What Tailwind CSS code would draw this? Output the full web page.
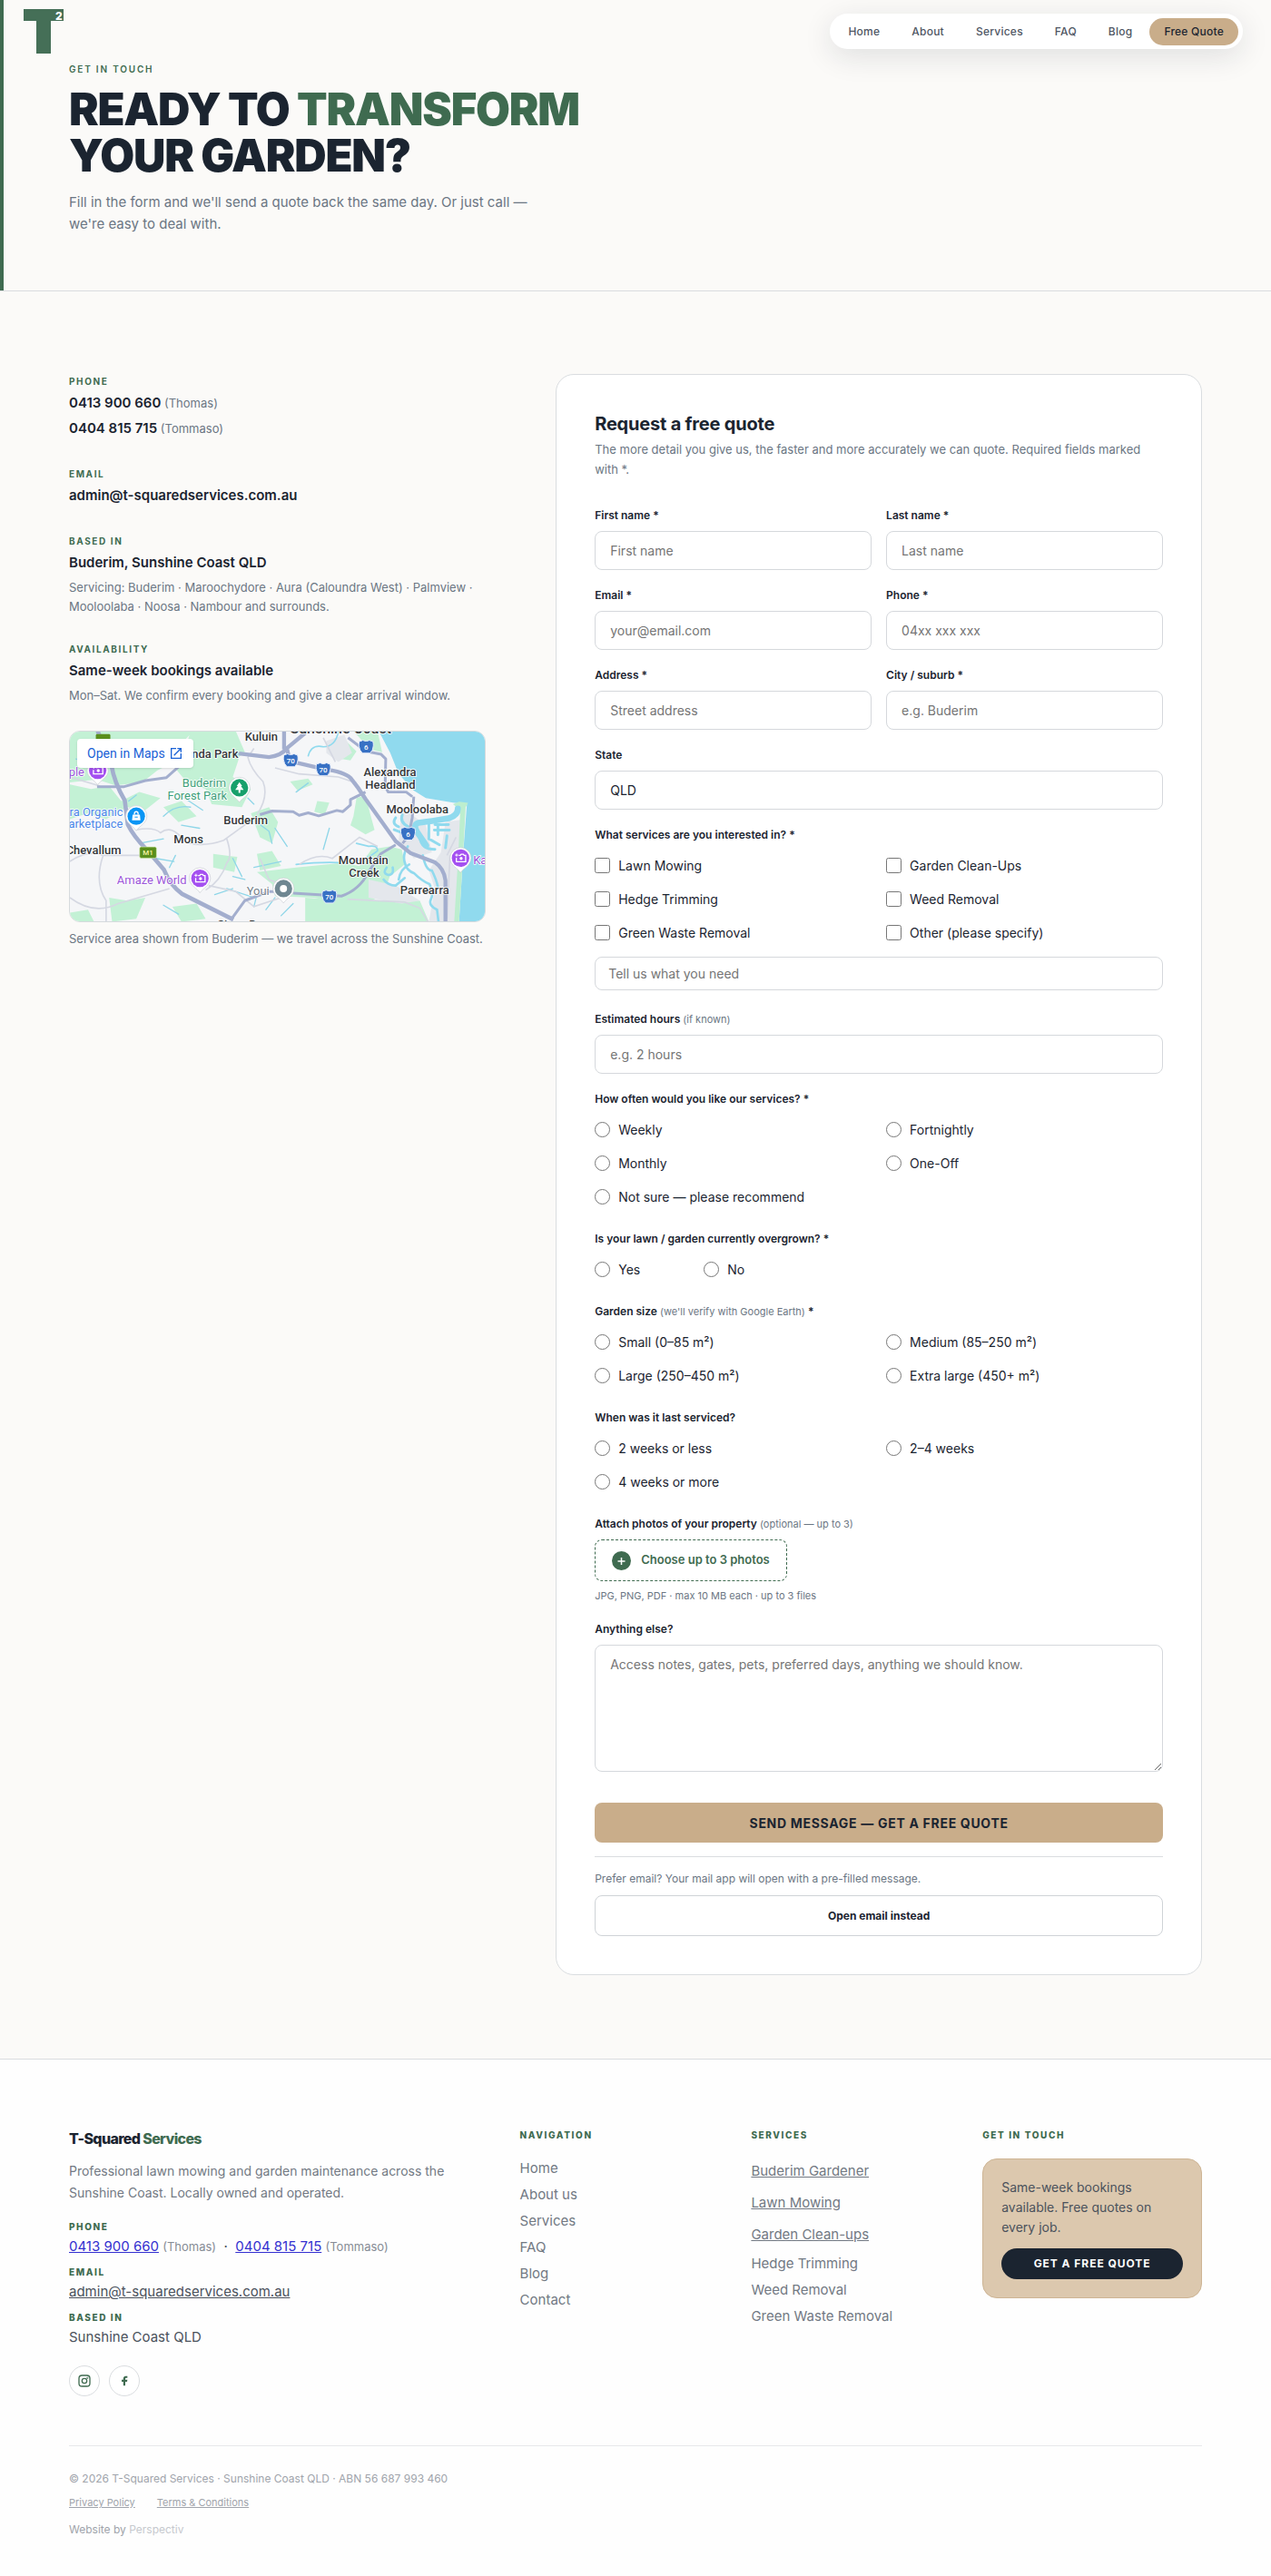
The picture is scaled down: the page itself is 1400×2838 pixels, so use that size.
<!DOCTYPE html>
<html lang="en">
<head>
    <meta charset="utf-8"/>
    <meta name="viewport" content="width=device-width, initial-scale=1"/>
    <title>Contact | T-Squared Services</title>
    <script src="https://cdn.jsdelivr.net/npm/@tailwindcss/browser@4"></script>
    <style>
        body {
            font-family: 'Inter', 'Liberation Sans', sans-serif;
        }
    </style>
</head>
<body class="bg-[#fbfaf8] text-[#1b2430]">
    <!-- Floating header -->
    <header class="absolute inset-x-0 top-0 z-10 flex items-start justify-between pl-[26px] pr-[31px]">
        <a href="#" class="mt-[9px]" aria-label="T-Squared Services">
            <svg class="w-[44px] h-[50px]" viewBox="0 0 44 50">
                <path d="M0 1h44v13H30v36H14V14H0z" fill="#456f57"/>
                <text x="35" y="13" font-size="12" font-weight="800" fill="#fff">2</text>
            </svg>
        </a>
        <nav class="mt-[15px] flex items-center h-[39px] rounded-full bg-white pl-1 pr-[5px] text-[12px] font-medium tracking-[0.02em] text-[#4f5663] shadow-[0_8px_32px_rgba(27,36,48,0.12)]">
            <a href="#" class="px-4">Home</a>
            <a href="#" class="px-4 ml-[3px]">About</a>
            <a href="#" class="px-4 ml-[3px]">Services</a>
            <a href="#" class="px-4 ml-[3px]">FAQ</a>
            <a href="#" class="px-4 ml-[3px]">Blog</a>
            <a href="#quote" class="flex items-center h-[30px] ml-[3px] px-4 rounded-full bg-[#c9ad8a] text-[#1b2430]">Free Quote</a>
        </nav>
    </header>

    <!-- Hero -->
    <section class="border-b border-[#dadcdf]">
        <div class="border-l-4 border-[#3f6b50] pl-[72px] pr-[76px] pt-[68px] pb-[61px]">
            <p class="text-[10px] leading-4 font-semibold tracking-[0.18em] text-[#3f6b50]">GET IN TOUCH</p>
            <h1 class="mt-[11px] text-[49px] leading-[51px] font-black tracking-[-0.025em]">READY TO <span class="text-[#3f6b50]">TRANSFORM</span><br/>YOUR GARDEN?</h1>
            <p class="mt-[14px] max-w-[520px] text-[15px] leading-6 text-[#6b7683]">Fill in the form and we'll send a quote back the same day. Or just call — we're easy to deal with.</p>
        </div>
    </section>

    <!-- Contact details + form -->
    <main class="grid grid-cols-[1fr_1.55fr] items-start gap-[77px] px-[76px] pt-[91px] pb-[92px]">
        <div class="flex flex-col gap-7">
            <div>
                <h2 class="text-[10px] leading-4 font-bold tracking-[0.16em] text-[#3f6b50]">PHONE</h2>
                <p class="mt-[2px] leading-7 text-[13px] text-[#6b7683]"><a href="tel:0413900660" class="text-[15px] font-semibold text-[#1b2430]">0413 900 660</a> (Thomas)</p>
                <p class="leading-7 text-[13px] text-[#6b7683]"><a href="tel:0404815715" class="text-[15px] font-semibold text-[#1b2430]">0404 815 715</a> (Tommaso)</p>
            </div>
            <div>
                <h2 class="text-[10px] leading-4 font-bold tracking-[0.16em] text-[#3f6b50]">EMAIL</h2>
                <p class="mt-[2px] leading-7 text-[15px] font-semibold"><a href="mailto:admin@t-squaredservices.com.au">admin@t-squaredservices.com.au</a></p>
            </div>
            <div>
                <h2 class="text-[10px] leading-4 font-bold tracking-[0.16em] text-[#3f6b50]">BASED IN</h2>
                <p class="mt-[2px] leading-7 text-[15px] font-semibold">Buderim, Sunshine Coast QLD</p>
                <p class="mt-[3px] text-[13px] leading-[21px] text-[#6b7683]">Servicing: Buderim · Maroochydore · Aura (Caloundra West) · Palmview · Mooloolaba · Noosa · Nambour and surrounds.</p>
            </div>
            <div>
                <h2 class="text-[10px] leading-4 font-bold tracking-[0.16em] text-[#3f6b50]">AVAILABILITY</h2>
                <p class="mt-[2px] leading-7 text-[15px] font-semibold">Same-week bookings available</p>
                <p class="mt-[3px] text-[13px] leading-[21px] text-[#6b7683]">Mon–Sat. We confirm every booking and give a clear arrival window.</p>
            </div>
            <div>
                <div class="relative h-[211px] rounded-xl border border-[#d6dadd] overflow-hidden">
                    <svg class="block w-full h-full" viewBox="20 48 1376 632" preserveAspectRatio="xMidYMid slice" font-family="Roboto, sans-serif">
                        <defs>
                            <g id="photo-pin">
                                <path d="M0 48C-8 34-35 24-35 0a35 35 0 0 1 70 0C35 24 8 34 0 48z" fill="#fff" stroke="#c9ccd1" stroke-width="2"/>
                                <circle r="29" fill="#a450f0"/>
                                <path d="M-6-9h5l3-4h7l3 4h5v21h-31V-1" fill="none" stroke="#fff" stroke-width="4"/>
                                <circle cx="2" cy="1" r="5" fill="#fff"/>
                                <path d="M-13-15v10M-18-10h10" stroke="#fff" stroke-width="3"/>
                            </g>
                            <path id="shield" d="M-22-20q6 1 11-3 5 3 11 3t11-3q5 4 11 3 3 8 2 16-1 16-11 24H-12q-10-8-12-24-1-8 2-16z" fill="#3871c4" stroke="#e8eefb" stroke-width="3"/>
                        </defs>
                        <rect x="20" y="48" width="1376" height="632" fill="#f5f6f8"/>
                        <!-- Parkland -->
                        <g fill="#c3f1d5">
                            <path d="M20 48h410l-40 40-20 60-60 30-50 40-90 10-60-20-90 10z"/>
                            <path d="M420 48h150l30 70-50 40-120 20-40-30z"/>
                            <path d="M20 225l70 15 60-10 40 50 60-30 70 20-50 40-60-10-70 40-60-20-60 20z"/>
                            <path d="M430 70l90-10 60 80-20 60 60 40-30 60-100-10-20-50-60-20-50-60z"/>
                            <path d="M330 300l60-20 50 50-60 20zM620 320l60-20 30 50-20 70-40-20zM495 455l80 10-10 50-70-15zM750 215l60-10 15 20-50 20zM640 455l50-10 30 50-70 15zM840 280l40 5-15 40-35-10zM150 600l60 10 60-10-30 70-80 10zM360 630l80-10 30 50-80 10zM20 650l60-10 20 40H20z"/>
                            <path d="M970 270l30-10 15 60 15 55-30 15-50-30 10-30z"/>
                            <path d="M770 500l150-15 60 10 40-55 60-10 40 10 10 50-50 40-20 60-80 40-150-30-130-5-10-40-50-40z"/>
                            <path d="M800 600l140 10 240 0 30 70H800z"/>
                            <path d="M870 85l60-10 40 40-20 30-60-10zM960 48h80l15 70-40-10z"/>
                        </g>
                        <g fill="#e4e7ec">
                            <path d="M1265 350l60-10-6 150-14 190h-95l20-110-20-60 40-60z"/>
                            <path d="M1120 300l80 60 20 90-60 20-50-60z"/>
                            <path d="M1010 540l90 20 80 50-60 10-110-20z"/>
                            <path d="M870 80l60-20 25 60-45 30-40-30z"/>
                        </g>
                        <!-- Ocean, spit and river mouth -->
                        <path d="M1044 48h352v632h-86l14-230 12-160-46-5-90-15-40-25-50-55-28-70z" fill="#90daee"/>
                        <path d="M1290 290l20-8 30 4-8 14-8 150-14 230h-16l14-230 6-140z" fill="#bdeecf"/>
                        <path d="M1150 275q20-8 60 8l72 6-4 28-90 14z" fill="#f5f6f8"/>
                        <g fill="none" stroke="#90daee" stroke-linecap="round">
                            <path d="M1306 305q0 22-30 32-60 10-100 15-20 5-5 30l30 45" stroke-width="20"/>
                            <path d="M1100 335q-15 20 10 30M1122 325q-10 25 20 40M1095 375l40 15M1210 345v60l35 20M1240 362v30M1275 358h-45M1278 376h-50M1270 395l-5 40M1180 400q5 40 50 40" stroke-width="9"/>
                            <path d="M1140 430q-20 30-8 60 5 20 30 30 25 25 50 35 15 30 5 50-10 20 20 35l5 40M1070 500q-15 20 5 25 20 0 15-25M1060 540q15 20 40 20l30-25M1145 490q-30 15-35 50M1190 460q10 50 30 50 15 30 20 55" stroke-width="8"/>
                            <path d="M810 130q10-40 50-30 40 0 50-50M770 490q90-10 160-5 70-5 110-40 0-20-30-15l-40-10" stroke-width="5"/>
                        </g>
                        <!-- Creeks -->
                        <g fill="none" stroke="#8fd6e8" stroke-width="4" stroke-linecap="round">
                            <path d="M330 330q40-40 90-30M400 270l60 40M560 470l30 60M640 350l40 30 10 40M700 370l40 60M540 570l90 30M500 590l60-20M330 625l50 30M350 500l20-40M700 600l-30 40M760 620l-40 40M770 250l40-30M880 370l-20 70M720 480l-90 20M600 540l-40-10M250 420l80-15M450 370l-60-10M215 280l25-20M305 470l60 10"/>
                            <path d="M120 70l60 30M560 130l30-10M610 270l20 20M640 590l-10 40M40 140l60 20"/>
                        </g>
                        <!-- Minor roads -->
                        <g fill="none" stroke="#d5d8e2" stroke-width="5">
                            <path d="M640 325q40-60 20-110-40-40-50-80l20-30M240 375q60-10 80 10 40-30 80 30 60 20 130-5l110-80M540 405q20 60 0 80-20 60-70 90M20 480q60-40 110-20l130 0M130 460q-30 90 10 150v70M20 600q80 60 160 20l170-50M480 560l90 20 60 50 90-30M780 490q60-40 110-20l90-70 60 30"/>
                            <path d="M700 170l80 20 130 10 60 20M860 70l40 80M940 605l190 10 50 20 30 50M650 470l30 70 80 30M20 200l100 30M1280 460l-10 210M1300 400l-30 60"/>
                        </g>
                        <!-- Main roads -->
                        <g fill="none" stroke="#a3aece" stroke-width="9" stroke-linejoin="round">
                            <path d="M730 48v60M580 122l100 12q40-4 60-30l60-50M740 108l10 40 110 25q70 10 90 30 25 30 50 70l100 140 50 40 80 30q30 20 35 60v140" stroke-width="13"/>
                            <path d="M112 48l45 110q10 60 45 120l10 80q20 40 60 80l60 70q20 50 60 80l170 85" stroke-width="14"/>
                            <path d="M110 232h90l70-20 70-10 45-40M650 325l40-12 70 2 20 12 30-8 35 10 60-18 20 4 25-22v-18l50-25M1155 265l-20-15-60 0-10-20 2-90-15-15-50-10-60-45M1160 265l-5 70-12 60-20 25M1100 425l-50 30-40 60q-30 60-90 80l-160-10M740 580h-60l-80 30-45 62"/>
                        </g>
                        <!-- Route badges -->
                        <rect x="106" y="58" width="48" height="34" rx="4" fill="#5a8f1c"/>
                        <rect x="251" y="432" width="56" height="37" rx="5" fill="#5a8f1c" stroke="#d8efb8" stroke-width="2"/>
                        <use href="#shield" x="752" y="146"/>
                        <use href="#shield" x="860" y="176"/>
                        <use href="#shield" x="880" y="598"/>
                        <use href="#shield" x="1002" y="101"/>
                        <use href="#shield" x="1141" y="389"/>
                        <g fill="#fff" font-size="24" font-weight="500" text-anchor="middle">
                            <text x="279" y="460" fill="#f6f3a4">M1</text>
                            <text x="752" y="155">70</text>
                            <text x="860" y="185">70</text>
                            <text x="880" y="607">70</text>
                            <text x="1002" y="110">6</text>
                            <text x="1141" y="398">6</text>
                        </g>
                        <!-- Pins -->
                        <use href="#photo-pin" x="112" y="178"/>
                        <use href="#photo-pin" x="451" y="536"/>
                        <use href="#photo-pin" x="1315" y="469"/>
                        <g transform="translate(582 236)">
                            <path d="M0 48C-8 34-35 24-35 0a35 35 0 0 1 70 0C35 24 8 34 0 48z" fill="#fff" stroke="#c9ccd1" stroke-width="2"/>
                            <circle r="29" fill="#17a06b"/>
                            <path d="M0-19l9 13H5l9 13H3v10h-6V7h-11l9-13h-4z" fill="#fff"/>
                        </g>
                        <g transform="translate(240 330)">
                            <path d="M0 48C-8 34-35 24-35 0a35 35 0 0 1 70 0C35 24 8 34 0 48z" fill="#fff" stroke="#c9ccd1" stroke-width="2"/>
                            <circle r="29" fill="#0a95f5"/>
                            <path d="M-12-5h24l2 19h-28z" fill="#fff"/>
                            <path d="M-6-5v-4a6 6 0 0 1 12 0v4" fill="none" stroke="#fff" stroke-width="4"/>
                            <path d="M-5 3h10" stroke="#0a95f5" stroke-width="3"/>
                        </g>
                        <g transform="translate(728 570)">
                            <path d="M0 48C-8 34-35 24-35 0a35 35 0 0 1 70 0C35 24 8 34 0 48z" fill="#fff" stroke="#c9ccd1" stroke-width="2"/>
                            <circle r="29" fill="#6f8792"/>
                            <circle r="12" fill="#fff"/>
                        </g>
                        <!-- Place names -->
                        <g font-size="39" stroke="#fff" stroke-width="5" stroke-linejoin="round" paint-order="stroke">
                            <g fill="#333639" font-weight="500">
                                <text x="600" y="81">Kuluin</text>
                                <text x="750" y="55" font-size="48">Sunshine Coast</text>
                                <text x="578" y="138" text-anchor="end">Sippy Kunda Park</text>
                                <text x="1081" y="198" text-anchor="middle">Alexandra</text>
                                <text x="1082" y="238" text-anchor="middle">Headland</text>
                                <text x="1172" y="321" text-anchor="middle">Mooloolaba</text>
                                <text x="603" y="358" text-anchor="middle">Buderim</text>
                                <text x="413" y="421" text-anchor="middle">Mons</text>
                                <text x="190" y="455" text-anchor="end">Chevallum</text>
                                <text x="993" y="489" text-anchor="middle">Mountain</text>
                                <text x="995" y="530" text-anchor="middle">Creek</text>
                                <text x="1196" y="587" text-anchor="middle">Parrearra</text>
                                <text x="620" y="702" text-anchor="middle">Sippy Downs</text>
                            </g>
                            <g fill="#3d9e7a" text-anchor="end">
                                <text x="538" y="234">Buderim</text>
                                <text x="541" y="275">Forest Park</text>
                            </g>
                            <g fill="#4a86e8" text-anchor="end">
                                <text x="196" y="330">Kunara Organic</text>
                                <text x="196" y="370">Marketplace</text>
                            </g>
                            <g fill="#9a55d9">
                                <text x="68" y="198" text-anchor="end">Temple</text>
                                <text x="407" y="556" text-anchor="end">Amaze World</text>
                                <text x="1357" y="489">Kawana</text>
                            </g>
                            <text x="606" y="590" fill="#75808a">Youi</text>
                        </g>
                    </svg>
                    <a href="#" class="absolute left-2 top-2 flex items-center gap-1 h-8 px-[11px] bg-white rounded-sm shadow text-[14px] text-[#1a62d6] font-['Roboto']">Open in Maps
                        <svg class="w-4 h-4" viewBox="0 0 24 24" fill="currentColor"><path d="M19 19H5V5h7V3H3v18h18v-9h-2zM14 3v2h3.600l-9.800 9.800 1.400 1.400L19 6.400V10h2V3z"/></svg>
                    </a>
                </div>
                <p class="mt-2 text-[13px] leading-[21px] text-[#6b7683]">Service area shown from Buderim — we travel across the Sunshine Coast.</p>
            </div>
        </div>

        <div id="quote" class="rounded-[20px] border border-[#dadde0] bg-white p-[42px]">
            <h2 class="text-[20px] leading-6 font-bold tracking-[-0.01em]">Request a free quote</h2>
            <p class="mt-[5px] text-[13px] leading-[22px] text-[#6b7683]">The more detail you give us, the faster and more accurately we can quote. Required fields marked with *.</p>

            <form class="mt-[31px] flex flex-col gap-[19px]">
                <div class="grid grid-cols-2 gap-x-4 gap-y-[19px]">
                    <div class="flex flex-col gap-2">
                        <label for="first-name" class="text-[12px] leading-[18px] font-semibold">First name *</label>
                        <input id="first-name" type="text" placeholder="First name" class="h-[43px] px-4 rounded-lg border border-[#d5d8dc] bg-white text-[14px] placeholder:text-[#757575]"/>
                    </div>
                    <div class="flex flex-col gap-2">
                        <label for="last-name" class="text-[12px] leading-[18px] font-semibold">Last name *</label>
                        <input id="last-name" type="text" placeholder="Last name" class="h-[43px] px-4 rounded-lg border border-[#d5d8dc] bg-white text-[14px] placeholder:text-[#757575]"/>
                    </div>
                    <div class="flex flex-col gap-2">
                        <label for="email" class="text-[12px] leading-[18px] font-semibold">Email *</label>
                        <input id="email" type="email" placeholder="your@email.com" class="h-[43px] px-4 rounded-lg border border-[#d5d8dc] bg-white text-[14px] placeholder:text-[#757575]"/>
                    </div>
                    <div class="flex flex-col gap-2">
                        <label for="phone" class="text-[12px] leading-[18px] font-semibold">Phone *</label>
                        <input id="phone" type="tel" placeholder="04xx xxx xxx" class="h-[43px] px-4 rounded-lg border border-[#d5d8dc] bg-white text-[14px] placeholder:text-[#757575]"/>
                    </div>
                    <div class="flex flex-col gap-2">
                        <label for="address" class="text-[12px] leading-[18px] font-semibold">Address *</label>
                        <input id="address" type="text" placeholder="Street address" class="h-[43px] px-4 rounded-lg border border-[#d5d8dc] bg-white text-[14px] placeholder:text-[#757575]"/>
                    </div>
                    <div class="flex flex-col gap-2">
                        <label for="city" class="text-[12px] leading-[18px] font-semibold">City / suburb *</label>
                        <input id="city" type="text" placeholder="e.g. Buderim" class="h-[43px] px-4 rounded-lg border border-[#d5d8dc] bg-white text-[14px] placeholder:text-[#757575]"/>
                    </div>
                </div>

                <div class="flex flex-col gap-2">
                    <label for="state" class="text-[12px] leading-[18px] font-semibold">State</label>
                    <input id="state" type="text" value="QLD" class="h-[43px] px-4 rounded-lg border border-[#d5d8dc] bg-white text-[14px]"/>
                </div>

                <fieldset class="mb-1">
                    <legend class="mb-[6px] text-[12px] leading-[18px] font-semibold">What services are you interested in? *</legend>
                    <div class="grid grid-cols-2 gap-x-4 text-[14px] leading-[21px]">
                        <label class="flex items-center gap-[9px] py-2"><input type="checkbox" name="service" class="size-[17px]"/>Lawn Mowing</label>
                        <label class="flex items-center gap-[9px] py-2"><input type="checkbox" name="service" class="size-[17px]"/>Garden Clean-Ups</label>
                        <label class="flex items-center gap-[9px] py-2"><input type="checkbox" name="service" class="size-[17px]"/>Hedge Trimming</label>
                        <label class="flex items-center gap-[9px] py-2"><input type="checkbox" name="service" class="size-[17px]"/>Weed Removal</label>
                        <label class="flex items-center gap-[9px] py-2"><input type="checkbox" name="service" class="size-[17px]"/>Green Waste Removal</label>
                        <label class="flex items-center gap-[9px] py-2"><input type="checkbox" name="service" class="size-[17px]"/>Other (please specify)</label>
                    </div>
                    <input type="text" aria-label="Other service" placeholder="Tell us what you need" class="block w-full mt-2 h-[37px] px-[14px] rounded-lg border border-[#d5d8dc] bg-white text-[14px] placeholder:text-[#757575]"/>
                </fieldset>

                <div class="flex flex-col gap-2">
                    <label for="hours" class="text-[12px] leading-[18px] font-semibold">Estimated hours <span class="text-[11px] font-normal text-[#6b7683]">(if known)</span></label>
                    <input id="hours" type="text" placeholder="e.g. 2 hours" class="h-[43px] px-4 rounded-lg border border-[#d5d8dc] bg-white text-[14px] placeholder:text-[#757575]"/>
                </div>

                <fieldset>
                    <legend class="mb-[6px] text-[12px] leading-[18px] font-semibold">How often would you like our services? *</legend>
                    <div class="grid grid-cols-2 gap-x-4 text-[14px] leading-[21px]">
                        <label class="flex items-center gap-[9px] py-2"><input type="radio" name="often" class="size-[17px]"/>Weekly</label>
                        <label class="flex items-center gap-[9px] py-2"><input type="radio" name="often" class="size-[17px]"/>Fortnightly</label>
                        <label class="flex items-center gap-[9px] py-2"><input type="radio" name="often" class="size-[17px]"/>Monthly</label>
                        <label class="flex items-center gap-[9px] py-2"><input type="radio" name="often" class="size-[17px]"/>One-Off</label>
                        <label class="flex items-center gap-[9px] py-2"><input type="radio" name="often" class="size-[17px]"/>Not sure — please recommend</label>
                    </div>
                </fieldset>

                <fieldset>
                    <legend class="mb-[6px] text-[12px] leading-[18px] font-semibold">Is your lawn / garden currently overgrown? *</legend>
                    <div class="flex text-[14px] leading-[21px]">
                        <label class="flex items-center gap-[9px] py-2 w-[120px]"><input type="radio" name="overgrown" class="size-[17px]"/>Yes</label>
                        <label class="flex items-center gap-[9px] py-2 w-[120px]"><input type="radio" name="overgrown" class="size-[17px]"/>No</label>
                    </div>
                </fieldset>

                <fieldset>
                    <legend class="mb-[6px] text-[12px] leading-[18px] font-semibold">Garden size <span class="text-[11px] font-normal text-[#6b7683]">(we'll verify with Google Earth)</span> *</legend>
                    <div class="grid grid-cols-2 gap-x-4 text-[14px] leading-[21px]">
                        <label class="flex items-center gap-[9px] py-2"><input type="radio" name="size" class="size-[17px]"/>Small (0–85 m²)</label>
                        <label class="flex items-center gap-[9px] py-2"><input type="radio" name="size" class="size-[17px]"/>Medium (85–250 m²)</label>
                        <label class="flex items-center gap-[9px] py-2"><input type="radio" name="size" class="size-[17px]"/>Large (250–450 m²)</label>
                        <label class="flex items-center gap-[9px] py-2"><input type="radio" name="size" class="size-[17px]"/>Extra large (450+ m²)</label>
                    </div>
                </fieldset>

                <fieldset>
                    <legend class="mb-[6px] text-[12px] leading-[18px] font-semibold">When was it last serviced?</legend>
                    <div class="grid grid-cols-2 gap-x-4 text-[14px] leading-[21px]">
                        <label class="flex items-center gap-[9px] py-2"><input type="radio" name="last" class="size-[17px]"/>2 weeks or less</label>
                        <label class="flex items-center gap-[9px] py-2"><input type="radio" name="last" class="size-[17px]"/>2–4 weeks</label>
                        <label class="flex items-center gap-[9px] py-2"><input type="radio" name="last" class="size-[17px]"/>4 weeks or more</label>
                    </div>
                </fieldset>

                <div>
                    <p class="text-[12px] leading-[18px] font-semibold">Attach photos of your property <span class="text-[11px] font-normal text-[#6b7683]">(optional — up to 3)</span></p>
                    <input id="photos" type="file" multiple class="sr-only"/>
                    <label for="photos" class="mt-2 flex items-center gap-[11px] w-fit h-[46px] px-[18px] rounded-lg border border-dashed border-[#3f6b50] text-[13px] font-semibold text-[#3f6b50]">
                        <svg class="size-[21px]" viewBox="0 0 21 21"><circle cx="10.500" cy="10.500" r="10.500" fill="#3f6b50"/><path d="M10.500 7v8M6.500 11h8" stroke="#fff" stroke-width="1.500"/></svg>
                        Choose up to 3 photos
                    </label>
                    <p class="mt-[7px] text-[11px] leading-[18px] text-[#6b7683]">JPG, PNG, PDF · max 10 MB each · up to 3 files</p>
                </div>

                <div class="flex flex-col gap-2">
                    <label for="notes" class="text-[12px] leading-[18px] font-semibold">Anything else?</label>
                    <textarea id="notes" placeholder="Access notes, gates, pets, preferred days, anything we should know." class="h-[140px] px-4 py-[10px] rounded-lg border border-[#d5d8dc] bg-white text-[14px] leading-[21px] resize-y placeholder:text-[#757575]"></textarea>
                </div>

                <div>
                    <button type="submit" class="block w-full mt-[15px] h-[44px] rounded-lg bg-[#c9ad8a] text-[14px] font-bold tracking-[0.05em]">SEND MESSAGE — GET A FREE QUOTE</button>
                    <div class="mt-[15px] border-t border-[#dadde0] pt-[15px]">
                        <p class="text-[12px] leading-[18px] text-[#6b7683]">Prefer email? Your mail app will open with a pre-filled message.</p>
                        <button type="button" class="block w-full mt-[9px] h-[45px] rounded-lg border border-[#cfd3d7] bg-white text-[12px] font-bold">Open email instead</button>
                    </div>
                </div>
            </form>
        </div>
    </main>

    <!-- Footer -->
    <footer class="border-t border-[#dadcdf] bg-[#fefefe] px-[76px] pt-[75px] pb-[42px]">
        <div class="grid grid-cols-[2fr_1fr_1fr_1fr] gap-[13px] pb-[54px]">
            <div>
                <p class="text-[16px] leading-6 font-extrabold tracking-[-0.04em]">T-Squared <span class="text-[#3f6b50]">Services</span></p>
                <p class="mt-3 max-w-[430px] text-[14px] leading-6 text-[#727983]">Professional lawn mowing and garden maintenance across the Sunshine Coast. Locally owned and operated.</p>
                <dl class="mt-[17px] text-[15px] text-[#4b525c]">
                    <dt class="text-[10px] leading-4 font-extrabold tracking-[0.16em] text-[#3f6b50]">PHONE</dt>
                    <dd class="mt-[2px] mb-2 leading-6"><a href="tel:0413900660" class="text-[#3430d0] underline">0413 900 660</a> <span class="text-[13px] text-[#868c95]">(Thomas)</span> &nbsp;·&nbsp; <a href="tel:0404815715" class="text-[#3430d0] underline">0404 815 715</a> <span class="text-[13px] text-[#868c95]">(Tommaso)</span></dd>
                    <dt class="text-[10px] leading-4 font-extrabold tracking-[0.16em] text-[#3f6b50]">EMAIL</dt>
                    <dd class="mt-[2px] mb-2 leading-6"><a href="mailto:admin@t-squaredservices.com.au" class="underline">admin@t-squaredservices.com.au</a></dd>
                    <dt class="text-[10px] leading-4 font-extrabold tracking-[0.16em] text-[#3f6b50]">BASED IN</dt>
                    <dd class="mt-[2px] leading-6">Sunshine Coast QLD</dd>
                </dl>
                <div class="mt-[19px] flex gap-[10px]">
                    <a href="#" aria-label="Instagram" class="flex items-center justify-center size-[34px] rounded-full border border-[#dadde0] bg-white text-[#3f6b50]">
                        <svg class="size-4" viewBox="0 0 24 24" fill="none" stroke="currentColor" stroke-width="2"><rect x="3" y="3" width="18" height="18" rx="5"/><circle cx="12" cy="12" r="4"/><circle cx="17" cy="7" r="0.500"/></svg>
                    </a>
                    <a href="#" aria-label="Facebook" class="flex items-center justify-center size-[34px] rounded-full border border-[#dadde0] bg-white text-[#3f6b50]">
                        <svg class="size-4" viewBox="0 0 24 24" fill="currentColor"><path d="M13.500 20v-6.500h3l.5-3.200h-3.500V8.600c0-.9.500-1.400 1.500-1.400h2V4.300C16.500 4.100 15.600 4 14.500 4c-2.600 0-4.300 1.600-4.300 4.200v2.100H7.500v3.200h2.700V20z"/></svg>
                    </a>
                </div>
            </div>
            <div>
                <h3 class="text-[10px] leading-4 font-extrabold tracking-[0.16em] text-[#3f6b50]">NAVIGATION</h3>
                <ul class="mt-[18px] flex flex-col gap-2 text-[15px] leading-[21px] text-[#727983]">
                    <li><a href="#">Home</a></li>
                    <li><a href="#">About us</a></li>
                    <li><a href="#">Services</a></li>
                    <li><a href="#">FAQ</a></li>
                    <li><a href="#">Blog</a></li>
                    <li><a href="#">Contact</a></li>
                </ul>
            </div>
            <div>
                <h3 class="text-[10px] leading-4 font-extrabold tracking-[0.16em] text-[#3f6b50]">SERVICES</h3>
                <ul class="mt-[18px] flex flex-col gap-2 text-[15px] leading-[21px] text-[#727983]">
                    <li class="leading-[27px]"><a href="#" class="underline">Buderim Gardener</a></li>
                    <li class="leading-[27px]"><a href="#" class="underline">Lawn Mowing</a></li>
                    <li class="leading-[27px]"><a href="#" class="underline">Garden Clean-ups</a></li>
                    <li>Hedge Trimming</li>
                    <li>Weed Removal</li>
                    <li>Green Waste Removal</li>
                </ul>
            </div>
            <div>
                <h3 class="text-[10px] leading-4 font-extrabold tracking-[0.16em] text-[#3f6b50]">GET IN TOUCH</h3>
                <div class="mt-[18px] rounded-2xl border border-[#ceb595] bg-[#dcc8ae] p-5">
                    <p class="text-[14px] leading-[22px] text-[#4b525c]">Same-week bookings available. Free quotes on every job.</p>
                    <a href="#quote" class="mt-3 flex items-center justify-center h-[34px] rounded-full bg-[#1b2430] text-[12px] font-bold tracking-[0.08em] text-white">GET A FREE QUOTE</a>
                </div>
            </div>
        </div>
        <div class="border-t border-[#e6e8ea] pt-[27px] text-[12px] leading-[18px] text-[#a0a4ab]">
            <p>© 2026 T-Squared Services · Sunshine Coast QLD · ABN 56 687 993 460</p>
            <div class="mt-2 flex gap-6 text-[11px]">
                <a href="#" class="underline">Privacy Policy</a>
                <a href="#" class="underline">Terms &amp; Conditions</a>
            </div>
            <p class="mt-3">Website by <a href="#" class="text-[#c6c9ce]">Perspectiv</a></p>
        </div>
    </footer>
</body>
</html>
